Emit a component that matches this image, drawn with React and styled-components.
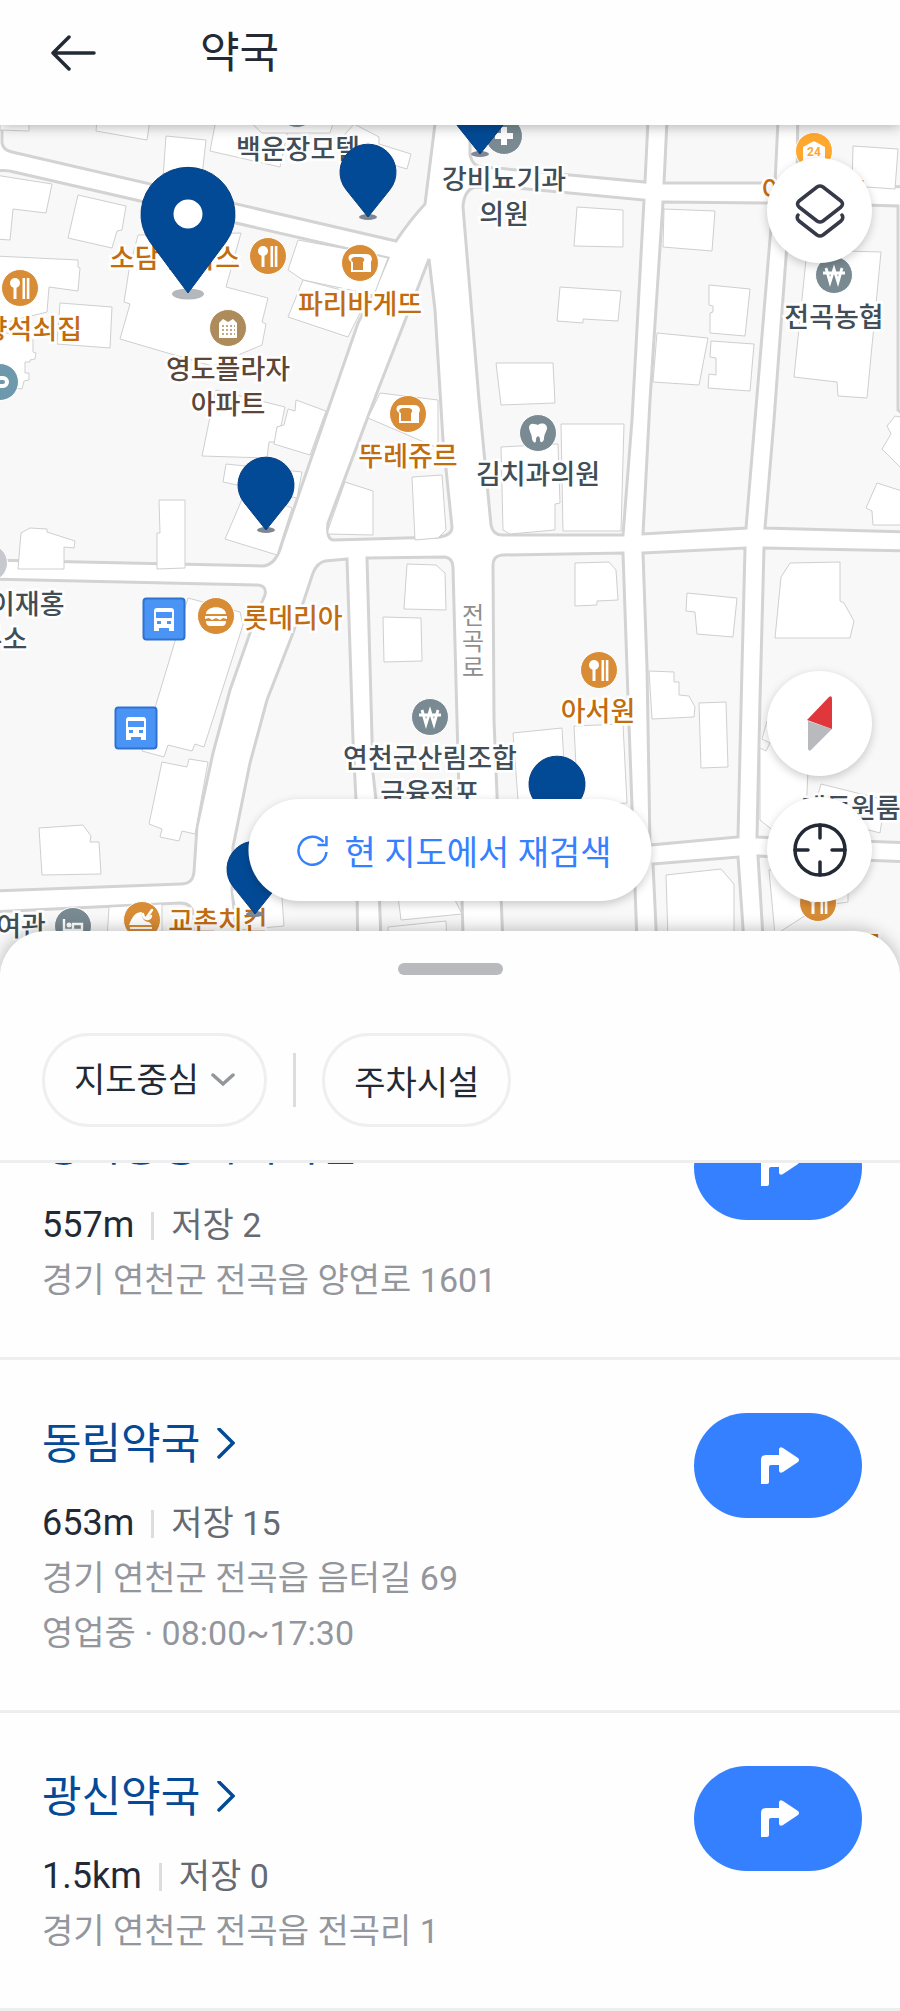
import React from 'react';
import styled, { createGlobalStyle, css } from 'styled-components';

const GlobalStyle = createGlobalStyle`
  * {
    box-sizing: border-box;
  }
  body {
    margin: 0;
    background: #fefefe;
    font-family: Roboto, 'Noto Sans CJK KR', sans-serif;
    color: #242a35;
  }
  button,
  select {
    font-family: inherit;
    color: inherit;
    border: 0;
    padding: 0;
    margin: 0;
    background: none;
    cursor: pointer;
  }
`;

const Page = styled.div`
  display: flex;
  flex-direction: column;
  min-height: 100vh;
  overflow: hidden;
`;

const Header = styled.header`
  display: flex;
  align-items: center;
  gap: 104px;
  height: 125px;
  padding: 0 50px 20px;
  background: #fefefe;
  box-shadow: 0 2px 12px rgba(0, 0, 0, 0.28);
  position: relative;
  z-index: 2;
`;

const BackButton = styled.button`
  display: flex;
`;

const HeaderTitle = styled.h1`
  margin: 0;
  font-size: 43px;
  font-weight: 400;
  line-height: 60px;
`;

const MapArea = styled.main`
  flex: 1;
  min-height: 480px;
  position: relative;
  overflow: hidden;
  background: #ffffff;
`;

const MapLayer = styled.svg`
  position: absolute;
  top: 0;
  left: 50%;
  width: 900px;
  height: 840px;
  margin-left: -450px;
`;

const labelColors = {
  food: '#c26c10',
  place: '#414d57',
  home: '#5c4539',
};

const MapLabel = styled.div`
  position: absolute;
  left: calc(50% + ${(p) => p.$x - 450}px);
  top: ${(p) => p.$y - 125}px;
  transform: translate(-50%, -18px);
  font-family: 'Noto Sans CJK KR', sans-serif;
  font-size: 27px;
  font-weight: 500;
  line-height: 35px;
  text-align: center;
  white-space: pre;
  color: ${(p) => labelColors[p.$tone]};
  -webkit-text-stroke: 5px #ffffff;
  paint-order: stroke fill;
`;

const RoadLabel = styled.div`
  position: absolute;
  left: calc(50% + 12px);
  top: 478px;
  width: 24px;
  font-size: 24px;
  line-height: 26px;
  word-break: break-all;
  color: #8e8e8e;
`;

const floating = css`
  position: absolute;
  display: flex;
  align-items: center;
  justify-content: center;
  background: #ffffff;
  box-shadow: 0 3px 10px rgba(0, 0, 0, 0.2);
`;

const RoundButton = styled.button`
  ${floating}
  right: 28px;
  width: 105px;
  height: 105px;
  border-radius: 50%;
  ${(p) => (p.$top ? `top: ${p.$top}px;` : `bottom: ${p.$bottom}px;`)}
`;

const SearchAgain = styled.button`
  ${floating}
  left: 50%;
  bottom: 64px;
  transform: translateX(-50%);
  gap: 16px;
  height: 102px;
  padding: 0 40px 0 48px;
  border-radius: 51px;
  font-size: 34px;
  color: #3580ff;
  white-space: nowrap;
`;

const Sheet = styled.section`
  position: relative;
  z-index: 1;
  margin-top: -34px;
  background: #fefefe;
  border-radius: 46px 46px 0 0;
  box-shadow: 0 -2px 16px rgba(0, 0, 0, 0.24);
`;

const Grip = styled.button`
  display: block;
  width: 105px;
  height: 12px;
  border-radius: 6px;
  background: #b9babe;
`;

const SheetTop = styled.div`
  display: flex;
  justify-content: center;
  padding: 32px 0 58px;
`;

const Filters = styled.div`
  display: flex;
  align-items: center;
  gap: 26px;
  padding: 0 42px 33px;
  border-bottom: 3px solid #eceeef;
`;

const chip = css`
  display: flex;
  align-items: center;
  gap: 12px;
  height: 94px;
  padding: 0 29px;
  border: 3px solid #eeefef;
  border-radius: 47px;
  font-size: 34px;
`;

const SelectChip = styled.label`
  ${chip}
`;

const ButtonChip = styled.button`
  ${chip}
`;

const SortSelect = styled.select`
  appearance: none;
  field-sizing: content;
  font-size: 34px;
  line-height: 55px;
  outline: none;
`;

const FilterDivider = styled.div`
  width: 3px;
  height: 54px;
  background: #dcdddf;
`;

const ListViewport = styled.div`
  overflow: hidden;
`;

/* the list is scrolled part of the way through its first entry */
const List = styled.ul`
  list-style: none;
  margin: -101px 0 0;
  padding: 0;
`;

const Item = styled.li`
  display: flex;
  justify-content: space-between;
  align-items: flex-start;
  padding: 53px 38px 49px 42px;
  border-bottom: 3px solid #eceeef;
`;

const ItemName = styled.a`
  display: flex;
  align-items: center;
  gap: 17px;
  margin-bottom: 21px;
  font-size: 43px;
  font-weight: 400;
  line-height: 62px;
  color: #044a97;
  text-decoration: none;
`;

const Meta = styled.div`
  display: flex;
  align-items: center;
  font-size: 34px;
  line-height: 55px;
`;

const Distance = styled.span`
  font-size: 36px;
`;

const Saved = styled.span`
  display: flex;
  align-items: center;
  color: #666a72;

  &::before {
    content: '';
    width: 3px;
    height: 28px;
    margin: 0 17px;
    background: #dcdddf;
  }
`;

const Detail = styled.div`
  font-size: 34px;
  line-height: 55px;
  color: #93969c;
`;

const RouteButton = styled.button`
  display: flex;
  align-items: center;
  justify-content: center;
  flex-shrink: 0;
  width: 168px;
  height: 105px;
  border-radius: 53px;
  background: #3580ff;
`;

const blocks = [
  'M2 100V143Q3 150 12 152L396 241Q410 220 425 204L438 100Z',
  'M-10 172Q5 169 14 172L388 258L372 295L358 323L282 543Q276 566 262 566L-10 560Z',
  'M429 259L417 290L378 390L328 523Q326 540 334 540L440 537Q452 535 452 527L443 440L435 310Z',
  'M470 100V155Q473 168 485 167L517 170L645 182L649 100Z',
  'M463 207Q464 190 475 187L517 188L644 200L632 420L623 535H502Q493 535 491 525L479 400Z',
  'M668 100L664 183H775L779 100Z',
  'M663 202L773 203L746 528L643 534L650 400Z',
  'M798 100L797 183L910 187V100Z',
  'M790 203L898 206V410L910 420V532L765 528L774 420Z',
  'M-10 579L258 585Q267 586 265 595L262 602L250 633L230 690L213 753L197 827L194 872Q193 884 181 884L-10 891Z',
  'M347 559L325 561Q317 563 313 573L293 633L267 700L250 763L233 847L232 890L240 970H358L356 800L353 740Z',
  'M367 558L445 557Q453 558 453 568L457 720L464 970H382L376 800L373 773Z',
  'M502 555L623 553L628 697L638 970H504L494 720L493 565Q493 556 502 555Z',
  'M643 553L745 548L742 667L738 837L650 845L647 667Z',
  'M764 548L910 551V843L757 837L760 700Z',
  'M653 864L738 857L746 970H658Z',
  'M758 856L910 862V970H765Z',
  'M-10 912L180 903Q192 903 194 915V970H-10Z',
];

const buildings = [
  'M0 120H29V131L0 130Z',
  'M97 120L96 131L147 140L150 120Z',
  'M166 136L206 140L201 185L163 178Z',
  'M216 120L210 151L280 167L290 120Z',
  'M248 120L262 133H330L334 120',
  'M354 124L379 137V144L411 154L407 169L370 158L340 140Z',
  'M-5 175L52 184L46 213L13 209L10 240L-5 239Z',
  'M78 195L126 206L122 230L117 231L112 248L68 238Z',
  'M-5 256L78 260V267L80 268L78 291L49 287L47 312L-5 325Z',
  'M60 303L112 307L110 348L57 344Z',
  'M138 235L241 233L226 287L268 298L262 322L266 324L262 345L212 366L120 339L130 304L124 302L129 270Z',
  'M298 240L347 249L388 258L374 295L303 280L288 270Z',
  'M303 280L368 297L348 337L288 317Z',
  'M33 340V352L36 353L35 359L30 360V362H25V373H29V380L24 381L22 389L-5 385V330Z',
  'M210 417L216 390L285 407L281 426L277 427L275 442H269L267 458L202 456Z',
  'M296 400L326 411L310 455L274 444L277 427L284 425L288 409L295 411Z',
  'M226 464L302 472L297 498L223 482Z',
  'M246 490L292 508L277 555L225 539Z',
  'M159 500H185V568L157 569V533H160Z',
  'M18 569L21 533L30 528L47 529V532L75 541L74 548L64 547V569Z',
  'M380 393L438 400V448L368 418Z',
  'M345 482L373 491V535L328 534V530Z',
  'M412 477L442 475L446 530L438 538L415 540Z',
  'M407 564L436 565L445 573L446 610L404 609Z',
  'M383 617L421 618L422 661L384 662Z',
  'M577 207L623 210V247L574 246Z',
  'M664 209L715 211L712 251L663 247Z',
  'M560 287L621 291L618 321L583 319V323L557 321Z',
  'M496 363H553L555 403L501 405Z',
  'M709 285L750 289L745 336L710 333V313L713 312V306L709 305Z',
  'M657 333L708 338L699 385L653 382Z',
  'M711 341L754 344L750 391L708 388L709 374L716 375V358L710 357Z',
  'M853 146L898 149L895 189L852 186Z',
  'M807 250L881 252L867 398L838 396L837 382L794 377Z',
  'M561 424H624L621 531H563Z',
  'M501 447L558 444L560 503L555 504V530L510 534L503 530Z',
  'M900 417L895 416L887 426L891 434L882 449L905 472V417Z',
  'M905 492L877 483L866 508L872 511L873 525H905Z',
  'M575 563L609 562L616 570L618 600L597 601V605L575 606Z',
  'M687 593L737 598L733 637L697 634L695 612L686 611Z',
  'M790 563L840 562V601L844 603L854 621L850 638H775L781 577Z',
  'M649 671L674 672V682H679V695L689 696L695 707L694 717L652 719Z',
  'M699 703L726 702L728 767L701 768Z',
  'M767 721L762 739L770 743L766 751L760 748V820L775 832L805 836L808 770Z',
  'M821 784L885 800L880 833L812 815Z',
  'M513 733L562 728L566 800H518Z',
  'M574 726L623 724L627 803L578 806Z',
  'M666 875L721 869L734 884V970H669Z',
  'M769 870L848 864V902L820 906L775 935Z',
  'M188 598L240 612L243 625L204 747L195 744L192 751L168 745L164 757L142 751Z',
  'M162 762L187 767L189 759L208 762L195 834L182 831L179 841L160 837L162 829L149 824Z',
  'M39 828L83 825L91 836L90 842H99L101 874L42 875Z',
  'M232 890L281 885L284 926L240 930Z',
  'M398 896L450 890L462 914L401 920Z',
  'M388 927L446 921L448 970H390Z',
  'M109 907L162 904V970H105Z',
];

const labels = [
  { x: 298, y: 148, tone: 'place', text: '백운장모텔' },
  { x: 504, y: 178, tone: 'place', text: '강비뇨기과\n의원' },
  { x: 814, y: 189, tone: 'food', text: '이마트24' },
  { x: 834, y: 316, tone: 'place', text: '전곡농협' },
  { x: 175, y: 257, tone: 'food', text: '소담 돈까스' },
  { x: 360, y: 303, tone: 'food', text: '파리바게뜨' },
  { x: 20, y: 328, tone: 'food', text: '고향석쇠집' },
  { x: 228, y: 368, tone: 'home', text: '영도플라자\n아파트' },
  { x: 408, y: 455, tone: 'food', text: '뚜레쥬르' },
  { x: 538, y: 473, tone: 'place', text: '김치과의원' },
  { x: -10, y: 603, tone: 'place', text: '법무사이재홍\n사무소' },
  { x: 293, y: 617, tone: 'food', text: '롯데리아' },
  { x: 598, y: 710, tone: 'food', text: '아서원' },
  { x: 430, y: 757, tone: 'place', text: '연천군산림조합\n금융점포' },
  { x: 851, y: 807, tone: 'place', text: '대동원룸' },
  { x: 218, y: 920, tone: 'food', text: '교촌치킨' },
  { x: 21, y: 925, tone: 'place', text: '여관' },
  { x: 820, y: 945, tone: 'food', text: '장수순대국' },
];

const glyphs = {
  blank: null,
  food: (
    <>
      <circle cx="-5" cy="-5" r="5" />
      <path d="M-6.5-3h3v14h-3zM2.5-10h2.6v21H2.5zM6.8-10h2.6v21H6.8z" />
    </>
  ),
  bread: (
    <>
      <path d="M-7-9H6C12-9 13-4 11-1V9H-9V-1C-13-4-12-9-7-9Z" />
      <path
        d="M-5-6H0C5-6 5-2 3-1V7H-7V-1C-10-2-9-6-5-6Z"
        fill="#d98c36"
      />
    </>
  ),
  cross: <path d="M-3-9h6v6h6v6H3v6h-6V3h-6v-6h6z" />,
  won: (
    <path
      d="M-8-7L-4 7L0-6L4 7L8-7M-11-2H11"
      fill="none"
      stroke="#fff"
      strokeWidth="2.8"
    />
  ),
  tooth: (
    <path d="M-9-6C-8-11-3-9 0-8C4-11 9-9 9-5C9-2 6 1 6 6C5 10 2 10 2 7C2 2-2 2-2 7C-2 11-5 10-6 6C-6 1-9-2-9-6ZM-2-8L3-4" />
  ),
  home: (
    <>
      <path d="M-9 10V-5L-5-9L0-6L5-9L9-5V10Z" />
      <path
        d="M-6-2H7M-6 2H7M-6 6H7"
        stroke="#ad8b5b"
        strokeWidth="1.6"
        strokeDasharray="2 2"
      />
    </>
  ),
  cup: (
    <path
      d="M-12-4H3A4 4 0 0 1 3 4H-8"
      fill="none"
      stroke="#fff"
      strokeWidth="4"
    />
  ),
  burger: (
    <path d="M-10-2C-10-11 10-11 10-2ZM-11 0H11V3L7 2L4 4L0 2L-4 4L-7 2L-11 3ZM-10 5H10C10 10 7 10 5 10H-5C-8 10-10 9-10 5Z" />
  ),
  bed: (
    <>
      <path
        d="M-9-7V10M-9 4H9V10M9 4V-2H0V4"
        fill="none"
        stroke="#fff"
        strokeWidth="2.4"
      />
      <circle cx="-4" cy="-1" r="2.500" />
    </>
  ),
  chicken: (
    <>
      <path d="M-13 5C-9-5-6-8 0-8C-1-3 2 2 7 2L10 5ZM-12 7H10V9H-12Z" />
      <path
        d="M1-6C1-1 7 1 9-4M5-3L10-10"
        fill="none"
        stroke="#fff"
        strokeWidth="2.500"
        strokeLinecap="round"
      />
    </>
  ),
  store: (
    <>
      <path d="M0-10L11-4V10H-11V-4Z" />
      <text
        y="5"
        textAnchor="middle"
        fontSize="12"
        fontWeight="700"
        fill="#ffa82f"
      >
        24
      </text>
    </>
  ),
};

const pois = [
  { x: 297, y: 109, kind: 'blank', color: '#7a8a92' },
  { x: -11, y: 563, kind: 'blank', color: '#c8c9ce' },
  { x: 504, y: 136, kind: 'cross', color: '#7a8a92' },
  { x: 814, y: 151, kind: 'store', color: '#ffa82f' },
  { x: 834, y: 275, kind: 'won', color: '#7a8a92' },
  { x: 268, y: 256, kind: 'food', color: '#d98c36' },
  { x: 20, y: 288, kind: 'food', color: '#d98c36' },
  { x: 599, y: 670, kind: 'food', color: '#d98c36' },
  { x: 818, y: 903, kind: 'food', color: '#d98c36' },
  { x: 360, y: 263, kind: 'bread', color: '#d98c36' },
  { x: 408, y: 414, kind: 'bread', color: '#d98c36' },
  { x: 228, y: 328, kind: 'home', color: '#ad8b5b' },
  { x: 0, y: 382, kind: 'cup', color: '#6e99ad' },
  { x: 538, y: 433, kind: 'tooth', color: '#7a8a92' },
  { x: 216, y: 616, kind: 'burger', color: '#d98c36' },
  { x: 430, y: 717, kind: 'won', color: '#7a8a92' },
  { x: 73, y: 926, kind: 'bed', color: '#7a8a92' },
  { x: 142, y: 920, kind: 'chicken', color: '#d98c36' },
];

const busStops = [
  { x: 164, y: 619 },
  { x: 136, y: 728 },
];

const pins = [
  { x: 480, y: 109 },
  { x: 368, y: 172 },
  { x: 266, y: 485 },
  { x: 557, y: 784 },
  { x: 255, y: 869 },
];

const pharmacies = [
  {
    name: '경기중앙약국지점',
    distance: '557m',
    saved: 2,
    details: ['경기 연천군 전곡읍 양연로 1601'],
  },
  {
    name: '동림약국',
    distance: '653m',
    saved: 15,
    details: ['경기 연천군 전곡읍 음터길 69', '영업중 · 08:00~17:30'],
    arrow: true,
  },
  {
    name: '광신약국',
    distance: '1.5km',
    saved: 0,
    details: ['경기 연천군 전곡읍 전곡리 1'],
    arrow: true,
  },
];

function BaseMap() {
  return (
    <MapLayer viewBox="0 125 900 840" aria-hidden="true">
      <g fill="#f8f8f8" stroke="#d3d3d3" strokeWidth="3">
        {blocks.map((d) => (
          <path key={d} d={d} />
        ))}
      </g>
      <g fill="#ffffff" stroke="#cfcfcf" strokeWidth="1">
        {buildings.map((d) => (
          <path key={d} d={d} />
        ))}
      </g>
    </MapLayer>
  );
}

function Markers() {
  return (
    <MapLayer viewBox="0 125 900 840" aria-hidden="true">
      {pois.map(({ x, y, kind, color }) => (
        <g key={`${x}-${y}`} transform={`translate(${x} ${y})`} fill="#fff">
          <circle r="18.5" fill={color} stroke="#fff" strokeWidth="1" />
          {glyphs[kind]}
        </g>
      ))}
      {busStops.map(({ x, y }) => (
        <g key={x} transform={`translate(${x} ${y})`}>
          <rect
            x="-20.5"
            y="-20.5"
            width="41"
            height="41"
            rx="3"
            fill="#4a94f6"
            stroke="#2f72cf"
            strokeWidth="2"
          />
          <path
            fill="#fff"
            fillRule="evenodd"
            d="M-7-11H7Q10-11 10-8V12H5V9H-5V12H-10V-8Q-10-11-7-11ZM-8-7V-1H8V-7ZM-7 2V5H-3V2ZM3 2V5H7V2Z"
          />
        </g>
      ))}
      {pins.map(({ x, y }) => (
        <g key={x} transform={`translate(${x} ${y})`}>
          <ellipse cy="45" rx="9" ry="3" fill="#7f8792" />
          <path
            d="M0 45L-22 17.500A28 28 0 1 1 22 17.500Z"
            fill="#034a96"
            stroke="#063f80"
            strokeWidth="1"
          />
        </g>
      ))}
      <g transform="translate(188 214)">
        <ellipse cy="80" rx="16" ry="5.500" fill="#b4b8bd" />
        <path
          d="M0 79L-38 28A47 47 0 1 1 38 28Z"
          fill="#034a96"
          stroke="#063f80"
          strokeWidth="1"
        />
        <circle r="14.500" fill="#fff" />
      </g>
    </MapLayer>
  );
}

function Pharmacy({ name, distance, saved, details, arrow }) {
  return (
    <Item>
      <div>
        <ItemName href="#detail">
          {name}
          {arrow && (
            <svg width="18" height="32" viewBox="0 0 18 32" fill="none">
              <path
                d="M2 1L16 15L2 29"
                stroke="#044a97"
                strokeWidth="3.500"
                strokeLinecap="round"
              />
            </svg>
          )}
        </ItemName>
        <Meta>
          <Distance>{distance}</Distance>
          <Saved>저장 {saved}</Saved>
        </Meta>
        {details.map((line) => (
          <Detail key={line}>{line}</Detail>
        ))}
      </div>
      <RouteButton type="button" aria-label="길찾기">
        <svg width="46" height="38" viewBox="-3 0 46 38">
          <path
            d="M3 37V13Q3 8 8 8H21V2Q22-1 25 1L40 11Q42 13 40 15L25 25Q22 27 21 24V18H13Q11 18 11 20V35Q11 37 9 37Z"
            fill="#fff"
          />
        </svg>
      </RouteButton>
    </Item>
  );
}

export default function App() {
  return (
    <Page>
      <GlobalStyle />
      <Header>
        <BackButton type="button" aria-label="뒤로">
          <svg width="46" height="36" viewBox="0 0 46 36" fill="none">
            <path
              d="M19 2L3 18L19 34M3 18H44"
              stroke="#242a35"
              strokeWidth="3.500"
              strokeLinecap="round"
              strokeLinejoin="round"
            />
          </svg>
        </BackButton>
        <HeaderTitle>약국</HeaderTitle>
      </Header>

      <MapArea>
        <BaseMap />
        {labels.map(({ x, y, tone, text }) => (
          <MapLabel key={text} $x={x} $y={y} $tone={tone}>
            {text}
          </MapLabel>
        ))}
        <RoadLabel>전곡로</RoadLabel>
        <Markers />

        <RoundButton type="button" aria-label="지도 종류" $top={33}>
          <svg width="50" height="54" viewBox="0 0 50 54" fill="none">
            <g stroke="#363a48" strokeWidth="3.500" strokeLinejoin="round">
              <path d="M22 3Q25 1 28 3L46 17Q49 20 46 23L28 37Q25 39 22 37L4 23Q1 20 4 17Z" />
              <path
                d="M3 31Q1 34 4 37L22 51Q25 53 28 51L46 37Q49 34 47 31"
                strokeLinecap="round"
              />
            </g>
          </svg>
        </RoundButton>
        <RoundButton type="button" aria-label="나침반" $bottom={189}>
          <svg width="30" height="56" viewBox="0 0 30 56">
            <path d="M3 25L3 53Q4 56 6 54L27 33Z" fill="#b9babe" />
            <path d="M2 24L24 1Q27-1 27 3V33Z" fill="#df373b" />
          </svg>
        </RoundButton>
        <RoundButton type="button" aria-label="현 위치" $bottom={63}>
          <svg width="54" height="54" viewBox="0 0 54 54" fill="none">
            <g stroke="#242a35" strokeWidth="3.500" strokeLinecap="round">
              <circle cx="27" cy="27" r="25" />
              <path d="M27 2V15M27 39V52M2 27H15M39 27H52" />
            </g>
          </svg>
        </RoundButton>
        <SearchAgain type="button">
          <svg width="32" height="32" viewBox="0 0 32 32" fill="none">
            <path
              d="M30 18A14 14 0 1 1 27 8M30 2V11H21"
              stroke="#3580ff"
              strokeWidth="2.500"
            />
          </svg>
          현 지도에서 재검색
        </SearchAgain>
      </MapArea>

      <Sheet>
        <SheetTop>
          <Grip type="button" aria-label="목록 펼치기" />
        </SheetTop>
        <Filters>
          <SelectChip>
            <SortSelect aria-label="정렬 기준" defaultValue="center">
              <option value="center">지도중심</option>
            </SortSelect>
            <svg width="24" height="14" viewBox="0 0 24 14" fill="none">
              <path
                d="M2 2L12 11L22 2"
                stroke="#93969c"
                strokeWidth="3.500"
                strokeLinecap="round"
              />
            </svg>
          </SelectChip>
          <FilterDivider />
          <ButtonChip type="button">주차시설</ButtonChip>
        </Filters>
        <ListViewport>
          <List>
            {pharmacies.map((item) => (
              <Pharmacy key={item.name} {...item} />
            ))}
          </List>
        </ListViewport>
      </Sheet>
    </Page>
  );
}
